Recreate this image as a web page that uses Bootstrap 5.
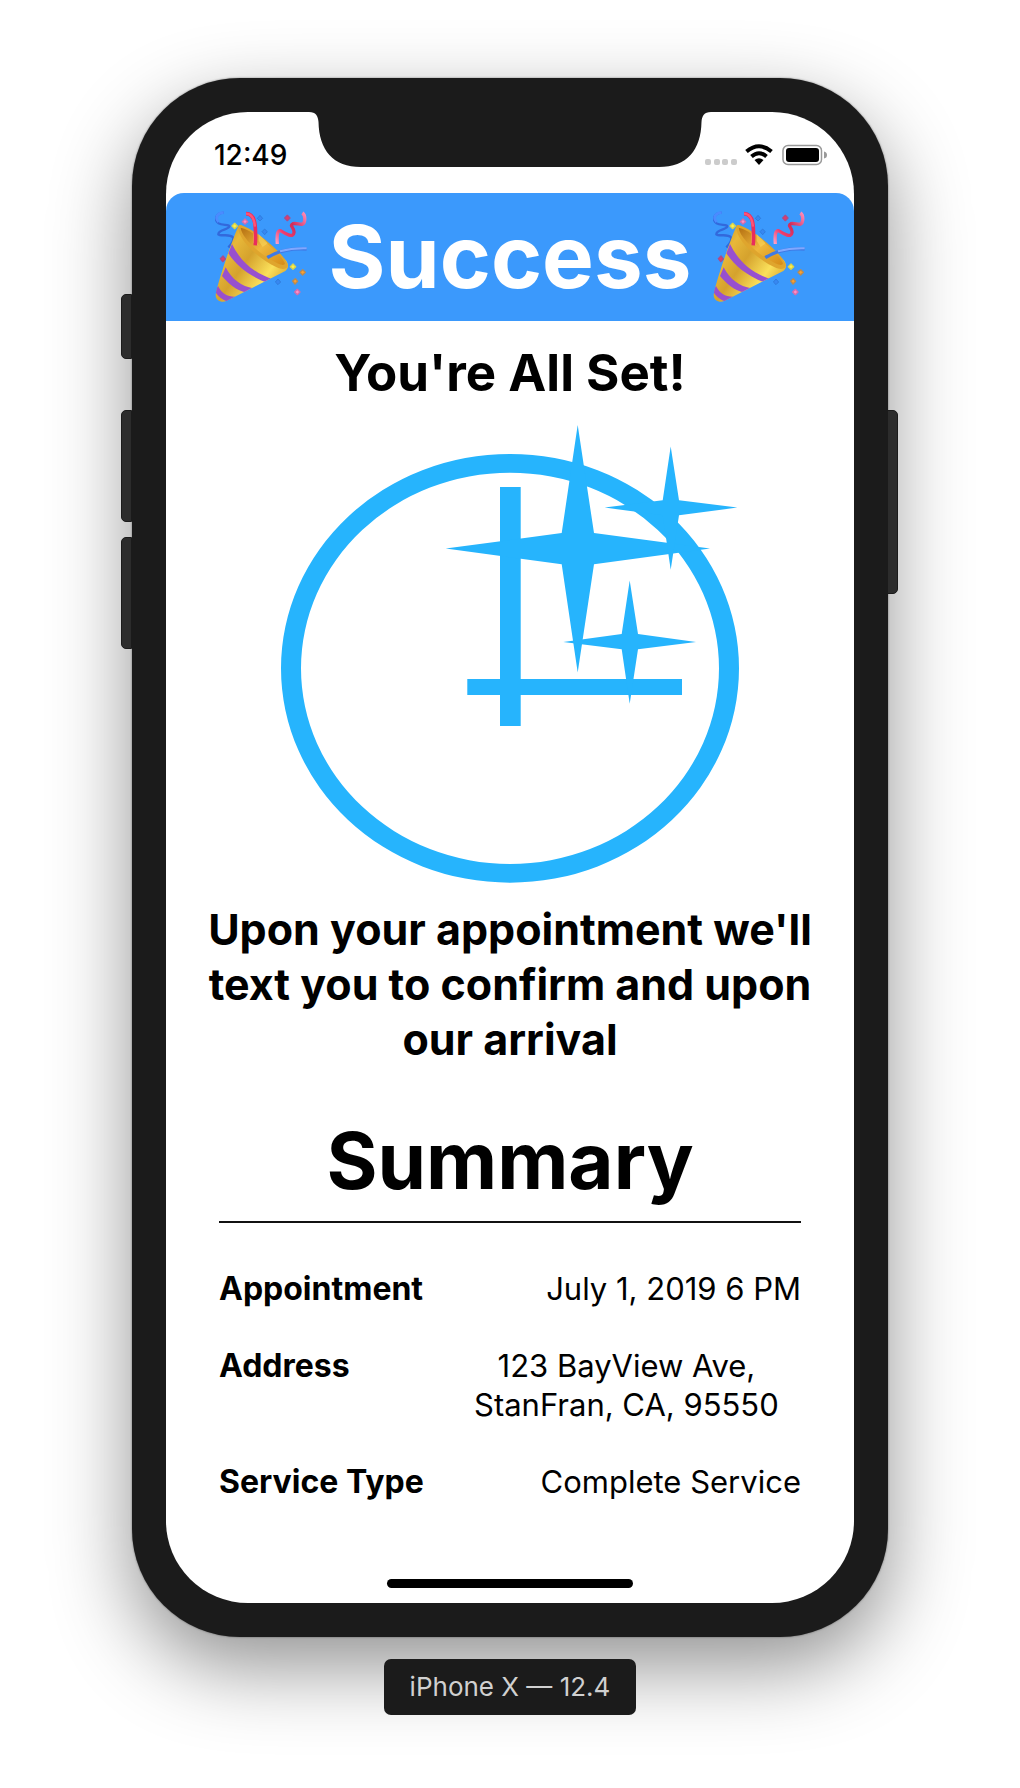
<!DOCTYPE html>
<html lang="en">
<head>
<meta charset="utf-8">
<meta name="viewport" content="width=device-width, initial-scale=1">
<title>Success</title>
<link href="https://cdn.jsdelivr.net/npm/bootstrap@5.3.0/dist/css/bootstrap.min.css" rel="stylesheet">
<style>
  body { font-family: Inter, "Liberation Sans", sans-serif; color: #000; background: #fff; }
  .stage { padding: 78px 24px 70px; }
  .phone { width: 100%; max-width: 756px; padding: 34px; background: #1b1b1b; border-radius: 108px;
    box-shadow: 0 0 2px rgba(0,0,0,.5), 0 30px 80px rgba(0,0,0,.43); }
  .side-key { position: absolute; width: 11px; background: #2c2c2c; border: 1px solid #1b1b1b; }
  .key-left { left: -11px; border-radius: 5px 0 0 5px; }
  .key-right { right: -10px; border-radius: 0 5px 5px 0; top: 332px; height: 184px; }
  .key-mute { top: 216px; height: 65px; }
  .key-up { top: 332px; height: 112px; }
  .key-down { top: 459px; height: 112px; }
  .screen { background: #fff; border-radius: 82px; }
  .notch { position: absolute; top: -1px; left: 50%; width: 402px; margin-left: -201px; }
  .status { height: 81px; padding: 4px 26px 0 48px; font-size: 28px; font-weight: 500; }
  .hero { background: #3b99fc; color: #fff; border-radius: 18px 18px 0 0; height: 128px; gap: 22px; }
  .hero h1 { font-size: 87px; line-height: 96px; font-weight: 700; }
  .all-set { font-size: 51px; line-height: 60px; font-weight: 700; margin-top: 22px; }
  .clock { width: 460px; max-width: 90%; margin-top: 19px; }
  .notice { font-size: 43px; line-height: 55px; font-weight: 700; margin-top: 19px; padding: 0 24px; }
  .summary { margin: 46px 53px 0; }
  .summary h2 { font-size: 78px; line-height: 96px; font-weight: 700; padding-bottom: 12px; border-bottom: 2px solid #111; }
  .summary dl { margin-top: 46px; gap: 38px; font-size: 32px; line-height: 39px; }
  .summary dt { font-weight: 700; }
  .summary dd { font-size: 31px; font-weight: 400; }
  .address { width: 60%; }
  .home-bar { width: 246px; height: 9px; border-radius: 5px; background: #000; margin: 78px auto 15px; }
  .device-tag { background: #1b1b1b; color: #d0d0d0; border-radius: 7px; font-size: 26px; line-height: 32px;
    padding: 12px 26px; margin-top: 22px; }
</style>
<script src="https://cdn.jsdelivr.net/npm/bootstrap@5.3.0/dist/js/bootstrap.bundle.min.js"></script>
</head>
<body>
<svg width="0" height="0" class="position-absolute" aria-hidden="true">
  <defs>
    <linearGradient id="gold" x1="0" y1="0" x2="1" y2=".7">
      <stop offset="0" stop-color="#b87c17"/><stop offset=".3" stop-color="#e8b839"/>
      <stop offset=".5" stop-color="#d5a22d"/><stop offset=".75" stop-color="#fae05a"/><stop offset="1" stop-color="#d09520"/>
    </linearGradient>
    <linearGradient id="inner" x1="0" y1="0" x2="1" y2="1">
      <stop offset="0" stop-color="#b46f11"/><stop offset=".5" stop-color="#efb83c"/><stop offset="1" stop-color="#d58b17"/>
    </linearGradient>
    <linearGradient id="pink" x1="0" y1="1" x2="1" y2="0">
      <stop offset="0" stop-color="#ff9fc4"/><stop offset=".3" stop-color="#ef3c6c"/><stop offset=".6" stop-color="#d02c5b"/><stop offset="1" stop-color="#ff8bb8"/>
    </linearGradient>
    <clipPath id="cone"><path d="M116 137 C104 160 58 290 47 342 C44 358 62 370 79 363 L256 273 C272 260 262 240 245 231 L125 137 C121 134 118 134 116 137Z"/></clipPath>
    <symbol id="popper" viewBox="45 93 276 276">
      <path d="M71 98 C50 99 40 118 56 130 C66 137 90 132 88 140 C84 150 54 148 55 163 C62 170 90 160 99 172 C103 182 92 195 85 202" fill="none" stroke="#3269dc" stroke-width="7"/>
      <path d="M71 98 C50 99 44 115 56 126" fill="none" stroke="#4b8bff" stroke-width="8"/>
      <g clip-path="url(#cone)">
        <rect x="40" y="130" width="240" height="240" fill="url(#gold)"/>
        <path d="M96 192 C120 242 160 280 225 300 L205 309 C150 290 110 258 85 220Z M77 262 C95 298 125 320 160 325 L140 338 C105 330 85 310 66 288Z M54 318 C65 340 80 350 105 350 L85 366 C65 360 50 345 44 332Z" fill="#9850cf"/>
      </g>
      <path d="M116 137 C107 168 164 230 230 262 C252 273 268 264 262 251 C252 223 172 153 130 138 C123 135 119 134 116 137Z" fill="#dfa52d"/>
      <path d="M122 143 C125 174 182 226 232 250 C247 257 257 256 254 248 C237 216 176 165 133 146Z" fill="url(#inner)"/>
      <path d="M159 156 L176 198 L159 188Z M176 162 L203 190 L188 201 L176 182Z" fill="#f8d256" opacity=".65"/>
      <path d="M138 101 C168 102 168 138 166 196" fill="none" stroke="#e92d5d" stroke-width="11"/>
      <path d="M138 101 C158 101 163 120 165 140" fill="none" stroke="#ff5375" stroke-width="7"/>
      <path d="M232 192 C230 165 232 146 245 154 C258 162 280 175 282 158 C284 142 266 138 279 131 C294 127 311 143 314 121 C315 112 313 103 307 99" fill="none" stroke="url(#pink)" stroke-width="10" stroke-linejoin="round"/>
      <path d="M202 233 C229 215 267 204 320 207" fill="none" stroke="#407ae5" stroke-width="10"/>
      <path d="M240 214 C265 207 290 204 320 205" fill="none" stroke="#80a8ff" stroke-width="6"/>
      <g stroke-linejoin="round" stroke-width="4">
        <path d="M104 130l8 8-8 8-8-8zM279 252l8 8-8 8-8-8z" fill="#fff04c" stroke="#d7d34e"/>
        <path d="M135 117l8 8-8 7-8-7zM292 328l8 8-8 8-8-8z" fill="#ff91c5" stroke="#d46dae"/>
        <path d="M262 106l8 8-8 8-8-8zM69 228l7 9-8 8-7-9z" fill="#e73868" stroke="#a94d8a"/>
        <path d="M308 269l8 8-8 8-8-8zM286 296l7 8-8 8-7-9z" fill="#ffa02c" stroke="#b98b52"/>
        <path d="M180 106l8 9-8 8-8-8zM194 147l8 8-8 9-8-9zM234 297l8 9-8 8-8-8z" fill="#3788f2" stroke="#2c73d0" stroke-width="2"/>
      </g>
    </symbol>
  </defs>
</svg>

<main class="stage d-flex flex-column align-items-center">
  <div class="phone position-relative">
    <span class="side-key key-left key-mute"></span>
    <span class="side-key key-left key-up"></span>
    <span class="side-key key-left key-down"></span>
    <span class="side-key key-right"></span>

    <div class="screen position-relative overflow-hidden">
      <svg class="notch" viewBox="0 -1 402 56" aria-hidden="true"><path fill="#1b1b1b" d="M0-1V0C7 0 9 4 9.500 10C10 38 24 55 52 55H350C378 55 392 38 392.500 10C393 4 395 0 402 0V-1Z"/></svg>
      <div class="status d-flex align-items-center justify-content-between">
        <span>12:49</span>
        <svg width="124" height="24" viewBox="0 0 124 24" aria-hidden="true">
          <g fill="#ccc"><rect x="1" y="16" width="6" height="6" rx="2"/><rect x="10" y="16" width="6" height="6" rx="2"/><rect x="18" y="16" width="6" height="6" rx="2"/><rect x="27" y="16" width="6" height="6" rx="2"/></g>
          <g fill="none" stroke="#000" stroke-width="4"><path d="M42.500 8.500Q55 -2 67.500 8.500"/><path d="M47.500 13.500Q55 7 62.500 13.500"/></g>
          <path d="M50.500 17Q55 13.500 59.500 17L55 22Z"/>
          <rect x="79" y="2.500" width="38.500" height="19" rx="5" fill="none" stroke="#999" stroke-width="1.500"/>
          <rect x="82" y="5" width="33" height="14" rx="3"/>
          <path d="M120 8.500Q123 9 123 12T120 15.500Z" fill="#999"/>
        </svg>
      </div>

      <header class="hero d-flex align-items-center justify-content-center">
        <svg width="92" height="92" aria-hidden="true"><use href="#popper"/></svg>
        <h1 class="m-0">Success</h1>
        <svg width="92" height="92" aria-hidden="true"><use href="#popper"/></svg>
      </header>

      <section class="text-center">
        <h2 class="all-set mb-0">You're All Set!</h2>
        <svg class="clock d-block mx-auto" viewBox="0 0 460 461" fill="#26b4fd" role="img" aria-label="Sparkling clock">
          <path fill-rule="evenodd" d="M1 246.300a229 214.400 0 0 1 458 0a229 214.400 0 0 1-458 0zM21 246.300a209 195.600 0 0 0 418 0a209 195.600 0 0 0-418 0z"/>
          <path d="M220 65h20.700v239H220zM187.300 257H402v16H187.300z"/>
          <path d="M297.700 3L314 111.100L430 126.600L314 142.200L297.700 250.600L281.700 142.200L165.700 126.600L281.700 111.100Z"/>
          <path d="M390.700 24.500L399 78.200L457.300 85.600L399 93.300L390.700 147.700L382.700 93.300L324.700 85.600L382.700 78.200Z"/>
          <path d="M349.700 158.500L358 212.100L416 219.900L358 227.300L349.700 281.700L341.700 227.300L283.300 219.900L341.700 212.100Z"/>
        </svg>
        <p class="notice mb-0">Upon your appointment we'll text you to confirm and upon our arrival</p>
      </section>

      <section class="summary">
        <h2 class="text-center mb-0">Summary</h2>
        <dl class="d-flex flex-column mb-0">
          <div class="d-flex justify-content-between"><dt>Appointment</dt><dd class="mb-0">July 1, 2019 6 PM</dd></div>
          <div class="d-flex justify-content-between"><dt>Address</dt><dd class="address text-center mb-0">123 BayView Ave, StanFran, CA, 95550</dd></div>
          <div class="d-flex justify-content-between"><dt>Service Type</dt><dd class="mb-0">Complete Service</dd></div>
        </dl>
      </section>
      <div class="home-bar"></div>
    </div>
  </div>
  <div class="device-tag position-relative">iPhone X — 12.4</div>
</main>
</body>
</html>
